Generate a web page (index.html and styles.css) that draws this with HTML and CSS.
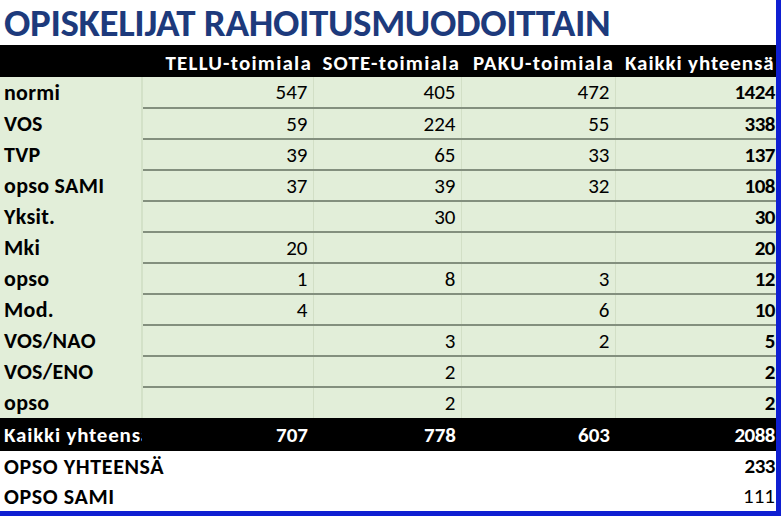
FILE: index.html
```html
<!DOCTYPE html>
<html lang="fi">
<head>
<meta charset="utf-8">
<title>Opiskelijat rahoitusmuodoittain</title>
<link rel="stylesheet" href="styles.css">
</head>
<body>
<div class="slide">
  <h1 class="title">OPISKELIJAT RAHOITUSMUODOITTAIN</h1>
  <table class="grid">
    <colgroup>
      <col class="c-label"><col class="c-tellu"><col class="c-sote"><col class="c-paku"><col class="c-total">
    </colgroup>
    <thead>
      <tr class="head">
        <th></th><th>TELLU-toimiala</th><th>SOTE-toimiala</th><th>PAKU-toimiala</th><th class="left">Kaikki yhteensä</th>
      </tr>
    </thead>
    <tbody>
      <tr><th>normi</th><td>547</td><td>405</td><td>472</td><td class="sum">1424</td></tr>
      <tr><th>VOS</th><td>59</td><td>224</td><td>55</td><td class="sum">338</td></tr>
      <tr><th>TVP</th><td>39</td><td>65</td><td>33</td><td class="sum">137</td></tr>
      <tr><th>opso SAMI</th><td>37</td><td>39</td><td>32</td><td class="sum">108</td></tr>
      <tr><th>Yksit.</th><td></td><td>30</td><td></td><td class="sum">30</td></tr>
      <tr><th>Mki</th><td>20</td><td></td><td></td><td class="sum">20</td></tr>
      <tr><th>opso</th><td>1</td><td>8</td><td>3</td><td class="sum">12</td></tr>
      <tr><th>Mod.</th><td>4</td><td></td><td>6</td><td class="sum">10</td></tr>
      <tr><th>VOS/NAO</th><td></td><td>3</td><td>2</td><td class="sum">5</td></tr>
      <tr><th>VOS/ENO</th><td></td><td>2</td><td></td><td class="sum">2</td></tr>
      <tr class="last"><th>opso</th><td></td><td>2</td><td></td><td class="sum">2</td></tr>
    </tbody>
    <tfoot>
      <tr class="total"><th>Kaikki yhteensä</th><td>707</td><td>778</td><td>603</td><td>2088</td></tr>
      <tr class="extra"><th colspan="2">OPSO YHTEENSÄ</th><td></td><td></td><td class="sum">233</td></tr>
      <tr class="extra"><th colspan="2">OPSO SAMI</th><td></td><td></td><td>111</td></tr>
    </tfoot>
  </table>
</div>
</body>
</html>
```
FILE: styles.css
```css
html, body {
  margin: 0;
  padding: 0;
  background: #ffffff;
}

.slide {
  width: 781px;
  height: 516px;
  box-sizing: border-box;
  border-right: 5px solid #0f1fd2;
  border-bottom: 5px solid #0f1fd2;
  overflow: hidden;
  font-family: Carlito, Lato, sans-serif;
  color: #000;
}

.title {
  margin: 0;
  padding-left: 4px;
  font-size: 39px;
  line-height: 45px;
  font-weight: 700;
  color: #1d3a7c;
  letter-spacing: -0.35px;
  white-space: nowrap;
}

.grid {
  border-collapse: collapse;
  table-layout: fixed;
  width: 776px;
  font-size: 21px;
}

.c-label { width: 142px; }
.c-tellu { width: 171px; }
.c-sote { width: 148px; }
.c-paku { width: 154px; }
.c-total { width: 161px; }

.grid th,
.grid td {
  padding: 0 5px 0 4px;
  white-space: nowrap;
  overflow: hidden;
  text-overflow: clip;
  text-align: right;
}

.grid th {
  text-align: left;
  font-weight: 700;
}

.head {
  height: 32px;
  background: #000;
  color: #fff;
}

.head th {
  text-align: right;
  padding-top: 3px;
  padding-right: 1px;
  font-size: 21px;
  letter-spacing: 1.2px;
}

.head th.left {
  text-align: left;
  padding-left: 10px;
  padding-right: 0;
  letter-spacing: 0.9px;
}

tbody tr {
  height: 31px;
  background: #e2eed9;
}

tbody td {
  border-bottom: 2px solid #838f7e;
  border-left: 1px solid #d2dfc6;
  padding-top: 2px;
}

tbody th {
  border-right: 2px solid #d3e1c8;
  padding-top: 2px;
  font-size: 22px;
  letter-spacing: 0.3px;
}

tbody tr.last td {
  border-bottom: none;
}

.sum {
  font-weight: 700;
  padding-right: 1px !important;
  letter-spacing: -0.5px;
}

.total {
  height: 33px;
  background: #000;
  color: #fff;
  font-weight: 700;
}

.total th {
  padding-right: 4px;
  letter-spacing: 0.8px;
}

.total td:last-child {
  padding-right: 1px;
  letter-spacing: -0.5px;
}

.extra {
  height: 30px;
}

.extra th {
  font-size: 22px;
  letter-spacing: 0.6px;
}

.extra td:last-child {
  padding-right: 1px;
}
```
